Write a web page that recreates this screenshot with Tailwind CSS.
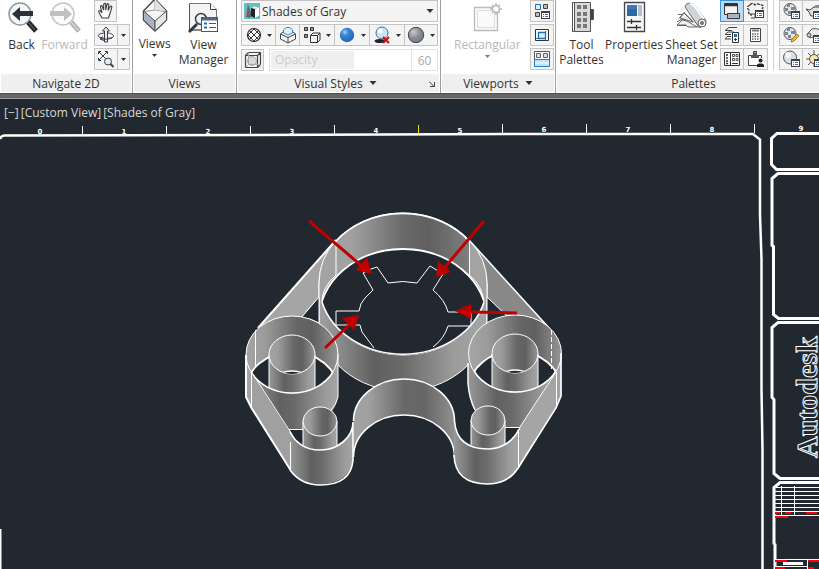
<!DOCTYPE html>
<html lang="en">
<head>
<meta charset="utf-8">
<meta name="viewport" content="width=device-width, initial-scale=1">
<title>Drawing workspace</title>
<script src="https://cdn.jsdelivr.net/npm/@tailwindcss/browser@4"></script>
</head>
<body class="h-screen flex flex-col overflow-hidden bg-[#212830] font-['Open_Sans','Noto_Sans',sans-serif] text-[12px] leading-[15px] text-[#333]">

<!-- Shared symbols -->
<svg class="hidden" aria-hidden="true">
  <symbol id="caret" viewBox="0 0 7 4"><path d="M0 0h7L3.500 4z" fill="currentColor"/></symbol>
  <symbol id="list" viewBox="0 0 9 8"><rect x=".5" y=".5" width="8" height="7" fill="#fff" stroke="#3c4048"/><path d="M1 1.500h7" stroke="#3c4048"/><path d="M2 3.500h1M4 3.500h3M2 5.500h1M4 5.500h3" stroke="#4a6fa5"/></symbol>
</svg>

<header class="flex h-[93px] shrink-0 overflow-hidden bg-white">

  <section class="flex w-[133px] shrink-0 flex-col border-r border-[#a0a0a0]">
    <div class="flex flex-1 px-px">
      <button class="flex w-[41px] flex-col items-center">
        <svg class="h-[37px] w-[32px]" viewBox="0 0 32 37" fill="none"><path d="M22 22l8 9" stroke="#22262b" stroke-width="5"/><path d="M23 23l6 7" stroke="#777" stroke-width="1"/><circle cx="14" cy="14" r="11" fill="#f3f8fb" stroke="#8c979e" stroke-width="1.500"/><path d="M6 14l8-7v4h13v5H14v5z" fill="#2c3138"/></svg>
        <span>Back</span>
      </button>
      <button class="flex w-[45px] flex-col items-center text-[#b8b8b8]" disabled>
        <svg class="h-[37px] w-[34px]" viewBox="0 0 34 37" fill="none"><path d="M23 22l8 9" stroke="#b5b5b5" stroke-width="5"/><path d="M23 22l7 8" stroke="#eee" stroke-width="1"/><circle cx="15" cy="14" r="11" fill="#fbfbfb" stroke="#c4c4c4" stroke-width="1.500"/><path d="M24 14l-8-7v4H2v5h14v5z" fill="#c0c0c0"/></svg>
        <span>Forward</span>
      </button>
      <div class="ml-[7px] flex flex-col items-start gap-[2px]">
        <button aria-label="Pan" class="flex h-[22px] w-[23px] items-center justify-center border border-[#c4c4c4] bg-[#f4f4f4]">
          <svg class="h-[18px] w-[18px]" viewBox="0 0 18 18"><path d="M5 16L2 10.500c-1-1.800.5-2.600 1.500-1.300L5 11 3.500 5c-.3-1.600 1.400-1.900 1.800-.5L6.700 8V2.500c0-1.500 1.900-1.500 2 0V8l1.300-5.500c.4-1.400 2-1 1.800.5L11 8.500l2-3.700c.8-1.200 2.200-.5 1.700.8L13 11.500 11.500 16z" fill="#fff" stroke="#3a3d42" stroke-width="1.100"/></svg>
        </button>
        <div class="flex h-[22px] w-[36px] border border-[#c4c4c4] bg-[#f4f4f4]">
          <button aria-label="Orbit" class="flex w-[23px] items-center justify-center border-r border-[#c4c4c4]"><svg class="h-[18px] w-[18px]" viewBox="0 0 18 18" fill="none" stroke="#3a3d42"><path d="M7 7C2 7.500 0 9.500 2 11s12 2 14 0c1.500-2-1-3.500-5-4M6 10.500l-3 2.500 4 1.500"/><path d="M7.500 16V5H5.500L9 1l3.500 4h-2v11z" fill="#e4edf4"/><path d="M3 12.500c4 1 8 1 12-.5"/></svg></button>
          <button aria-label="Orbit options" class="flex flex-1 items-center justify-center"><svg class="h-[3px] w-[5px]"><use href="#caret"/></svg></button>
        </div>
        <div class="flex h-[22px] w-[36px] border border-[#c4c4c4] bg-[#f4f4f4]">
          <button aria-label="Zoom extents" class="flex w-[23px] items-center justify-center border-r border-[#c4c4c4]"><svg class="h-[18px] w-[18px]" viewBox="0 0 18 18" fill="none" stroke="#3a3d42"><path d="M2 2l8 8M10 2l-8 8M1.500 4V1.500H4M8 1.500h2.500V4M1.500 8v2.500H4"/><circle cx="11" cy="11.500" r="3.500" fill="#dcebf5"/><path d="M13.500 14l3 3" stroke-width="2"/></svg></button>
          <button aria-label="Zoom options" class="flex flex-1 items-center justify-center"><svg class="h-[3px] w-[5px]"><use href="#caret"/></svg></button>
        </div>
      </div>
    </div>
    <h2 class="mx-px mb-px flex h-[18px] items-center justify-center bg-[#efefef]">Navigate 2D</h2>
  </section>

  <section class="flex w-[104px] shrink-0 flex-col border-r border-[#a0a0a0]">
    <div class="flex flex-1 justify-center gap-[8px] pr-[2px]">
      <button class="flex flex-col items-center">
        <svg class="h-[36px] w-[26px]" viewBox="0 0 26 36" stroke="#4a4d52" stroke-linejoin="round"><path d="M13-1L1.500 11v9L13 31l11.500-11v-9z" fill="#f5f5f5" stroke-width="1.500"/><path d="M1.500 11L13 21v10L1.500 20z" fill="#a9b4c0"/><path d="M24.500 11L13 21v10l11.500-11z" fill="#e6e6e6"/><path d="M13-1v11L3 11.500M13 10l10 1.500" fill="none" stroke="#999"/><path d="M13-1v11l11 1z" fill="#e2e2e2" stroke="none"/></svg>
        <span>Views</span>
        <svg class="mt-[3px] h-[3px] w-[5px]"><use href="#caret"/></svg>
      </button>
      <button class="flex flex-col items-center">
        <svg class="h-[37px] w-[32px]" viewBox="0 0 32 37" fill="none"><path d="M2.500 3.500h21l6 6V30h-27z" fill="#f4f4f4" stroke="#777"/><path d="M23.500 3.500v6h6" fill="#fff" stroke="#3c4048"/><path d="M2 30h13M2.500 4v26" stroke="#555"/><circle cx="14" cy="19" r="5.500" fill="#e8f2f9" stroke="#3c4048" stroke-width="1.500"/><path d="M10 24l-8 8" stroke="#33373c" stroke-width="3"/><rect x="14.500" y="17.500" width="16" height="14" fill="#fff" stroke="#4a5568"/><path d="M15 19h15" stroke="#58667c" stroke-width="3"/><path d="M17 23.500h3M17 27.500h3" stroke="#2d6cb5" stroke-width="2"/><path d="M22 23.500h7M22 27.500h7" stroke="#555"/></svg>
        <span>View<br>Manager</span>
      </button>
    </div>
    <h2 class="mx-px mb-px flex h-[18px] items-center justify-center bg-[#efefef]">Views</h2>
  </section>

  <section class="flex w-[204px] shrink-0 flex-col border-r border-[#a0a0a0]">
    <div class="flex flex-1 flex-col gap-[2px] pr-[2px] pl-[4px]">
      <div class="relative flex h-[22px] border border-[#c4c4c4] bg-[#f4f4f4]">
        <svg class="absolute top-[2px] left-[2px] h-[16px] w-[16px]" viewBox="0 0 16 16"><path d="M0 0h16v16H0z" fill="#5cc4c6"/><path d="M4 1l4 12-3 2-5-2z" fill="#666"/><path d="M4 1L2 14l-2-1z" fill="#aaa"/><path d="M7 5l3-2 5 1v9l-4 2-4-2z" fill="#222"/><path d="M7 5l3-2 5 1-4 2z" fill="#eee"/><path d="M11 6l4-2v9l-4 2z" fill="#fff"/></svg>
        <select aria-label="Visual style" class="flex-1 appearance-none pl-[20px] outline-none"><option>Shades of Gray</option></select>
        <svg class="pointer-events-none absolute top-[8px] right-[3px] h-[4px] w-[8px]"><use href="#caret"/></svg>
      </div>
      <div class="flex h-[22px] divide-x divide-[#c4c4c4] border border-[#c4c4c4] bg-[#f4f4f4]">
        <button aria-label="X-ray" class="flex w-[34px] items-center justify-center gap-[5px]"><svg class="h-[16px] w-[16px]" viewBox="0 0 16 16" fill="none" stroke="#222"><circle cx="8" cy="8" r="6.500" fill="#fff" stroke-width="1.200"/><path d="M4 4l8 8M8 2l6 6M2 8l6 6M12 4l-8 8M8 2L2 8M14 8l-6 6" stroke-width=".9"/></svg><svg class="h-[3px] w-[5px]"><use href="#caret"/></svg></button>
        <button aria-label="Isolines" class="flex w-[24px] items-center justify-center"><svg class="h-[18px] w-[18px]" viewBox="0 0 18 18" stroke="#444" stroke-linejoin="round"><path d="M1.500 8L5 5h8l3.500 3v5L9 17l-7.500-4z" fill="#f5f5f5"/><path d="M1.500 8L9 11.500 16.500 8M9 11.500V17" fill="none"/><path d="M4.500 7V4L7 1.500h4L13.500 4v3L9 9z" fill="#dff0fb" stroke="#3b8cc9"/></svg></button>
        <button aria-label="Edge faces" class="flex w-[35px] items-center justify-center gap-[5px]"><svg class="h-[18px] w-[18px]" viewBox="0 0 18 18" fill="none" stroke="#333"><path d="M1.500 1.500h3v3h-3zM7.500 1.500h3v3h-3zM1.500 8.500h3v3h-3z" fill="#999"/><path d="M7.500 9.500L10 7h7v7l-2.500 2.500h-7zM7.500 9.500h7v7M14.500 9.500L17 7" fill="#f8f8f8" stroke-linejoin="round"/></svg><svg class="h-[3px] w-[5px]"><use href="#caret"/></svg></button>
        <button aria-label="Lighting quality" class="flex w-[35px] items-center justify-center gap-[6px]"><svg class="h-[16px] w-[16px]" viewBox="0 0 16 16"><defs><radialGradient id="blue" cx=".35" cy=".3" r=".7"><stop stop-color="#a4d0f5"/><stop offset=".35" stop-color="#3a86d4"/><stop offset="1" stop-color="#1e67bc"/></radialGradient></defs><circle cx="8" cy="8" r="7.200" fill="url(#blue)"/></svg><svg class="h-[3px] w-[5px]"><use href="#caret"/></svg></button>
        <button aria-label="Shadows" class="flex w-[35px] items-center justify-center gap-[5px]"><svg class="h-[18px] w-[17px]" viewBox="0 0 17 18"><ellipse cx="6" cy="15" rx="5.500" ry="2" fill="#222"/><circle cx="8" cy="7" r="6" fill="#cde6f7" stroke="#3f6e96"/><circle cx="6" cy="5" r="2.500" fill="#fff"/><path d="M9 11l6 6M15 11l-6 6" stroke="#cf1111" stroke-width="2.200"/></svg><svg class="h-[3px] w-[5px]"><use href="#caret"/></svg></button>
        <button aria-label="Materials" class="flex flex-1 items-center justify-center gap-[5px]"><svg class="h-[18px] w-[18px]" viewBox="0 0 18 18"><defs><radialGradient id="gray" cx=".35" cy=".3" r=".75"><stop stop-color="#c8ccd2"/><stop offset=".5" stop-color="#8b9098"/><stop offset="1" stop-color="#767a80"/></radialGradient></defs><circle cx="9" cy="9" r="7.700" fill="url(#gray)" stroke="#43474d"/></svg><svg class="h-[3px] w-[5px]"><use href="#caret"/></svg></button>
      </div>
      <div class="mt-px flex h-[22px] gap-[5px]">
        <button aria-label="X-ray effect" class="flex w-[23px] items-center justify-center border border-[#c4c4c4] bg-[#f4f4f4]"><svg class="h-[18px] w-[18px]" viewBox="0 0 18 18" fill="none" stroke="#444"><path d="M1.500 4.500L4.500 1.500h12v12l-3 3h-12zM1.500 4.500h12v12M13.500 4.500l3-3" stroke-width="1.200" stroke-linejoin="round"/><circle cx="8" cy="10" r="4.500" fill="#d8d8d8" stroke="#aaa"/><path d="M4.500 1.500v12h12M4.500 13.500l-3 3" stroke="#aaa"/></svg></button>
        <div class="relative flex flex-1 border border-[#e2e2e2]">
          <input id="opacity" type="range" value="60" disabled class="m-px min-w-0 flex-1 appearance-none bg-linear-to-r from-[#efefef] from-60% to-white to-60% [&::-webkit-slider-thumb]:opacity-0">
          <label for="opacity" class="pointer-events-none absolute top-[2px] left-[5px] text-[#cccccc]">Opacity</label>
          <input aria-label="Opacity value" value="60" disabled class="w-[26px] border-l border-[#e2e2e2] text-center text-[#aaa]">
        </div>
      </div>
    </div>
    <h2 class="relative mx-px mb-px flex h-[18px] items-center justify-center gap-[6px] bg-[#efefef] pr-[6px]">Visual Styles <svg class="h-[4px] w-[8px]"><use href="#caret"/></svg>
      <svg class="absolute right-[4px] bottom-[5px] h-[6px] w-[6px]" viewBox="0 0 6 6" stroke="#444" fill="none"><path d="M0 .5l5 5M5.500 1v4.500H1"/></svg></h2>
  </section>

  <section class="flex w-[115px] shrink-0 flex-col border-r border-[#a0a0a0]">
    <div class="flex flex-1 justify-between pr-px pl-[13px]">
      <button class="flex flex-col items-center text-[#b8b8b8]" disabled>
        <svg class="h-[37px] w-[32px]" viewBox="0 0 32 37" fill="none" stroke="#bbb"><path d="M3.500 7.500h23v23h-23z" fill="#fafafa" stroke-width="1.300"/><path d="M6.500 10.500h17v17h-17z" stroke="#ddd"/><circle cx="25" cy="9" r="3.500" fill="#fff" stroke-width="1.500"/><path d="M25 3v3M25 12v3M19 9h3M28 9h3M21 5l2 2M27 11l2 2M29 5l-2 2M23 11l-2 2" stroke-width="1.500"/></svg>
        <span>Rectangular</span>
        <svg class="mt-[3px] h-[3px] w-[5px] text-[#777]"><use href="#caret"/></svg>
      </button>
      <div class="flex flex-col gap-[2px]">
        <button aria-label="Named viewports" class="flex h-[22px] w-[24px] items-center justify-center border border-[#c4c4c4] bg-[#f4f4f4]"><svg class="h-[18px] w-[18px]" viewBox="0 0 18 18" fill="none"><path d="M2.500 2.500h5v5h-5z" fill="#dff0fb" stroke="#1c72b8"/><path d="M10.500 2.500h4v4h-4zM2.500 10.500h4v4h-4z" fill="#bbb" stroke="#444"/><use href="#list" x="8" y="9" width="9" height="8"/></svg></button>
        <button aria-label="Clip viewport" class="flex h-[22px] w-[24px] items-center justify-center border border-[#c4c4c4] bg-[#f4f4f4]"><svg class="h-[18px] w-[18px]" viewBox="0 0 18 18" fill="none"><path d="M2.500 3.500h13v11h-13z" fill="#fff" stroke="#333"/><path d="M5.500 6.500h7v6h-7z" fill="#dff0fb" stroke="#1c72b8" stroke-width="1.300"/><path d="M3 12.500h10M12.500 5v9" stroke="#1c72b8"/></svg></button>
        <button aria-label="Join viewports" class="flex h-[22px] w-[24px] items-center justify-center border border-[#c4c4c4] bg-[#f4f4f4]"><svg class="h-[18px] w-[18px]" viewBox="0 0 18 18" fill="none"><path d="M1.500 1.500h15v15h-15z" fill="#fff" stroke="#555"/><path d="M3.500 3.500h4v4h-4zM10.500 3.500h4v4h-4z" fill="#ddd" stroke="#666"/><path d="M1.500 9.500h15v7h-15z" fill="#bfe3fa" stroke="#1c85cc"/><path d="M2 13h14" stroke="#fff"/></svg></button>
      </div>
    </div>
    <h2 class="mx-px mb-px flex h-[18px] items-center justify-center gap-[6px] bg-[#efefef]">Viewports <svg class="h-[4px] w-[8px]"><use href="#caret"/></svg></h2>
  </section>

  <section class="flex w-[276px] shrink-0 flex-col border-r border-[#a0a0a0]">
    <div class="flex flex-1 pl-[3px]">
      <button class="flex w-[45px] flex-col items-center">
        <svg class="h-[37px] w-[26px]" viewBox="0 0 26 37"><path d="M3.500 2.500h18v7h3v10h-3v12h-18z" fill="#dadada" stroke="#555"/><path d="M3.500 2.500h2v29h-2z" fill="#fff" stroke="#555"/><path d="M21 9h3v11h-3z" fill="#444"/><path d="M8 5h4v4H8zM14 5h4v4h-4zM8 12h4v4H8zM14 12h4v4h-4zM8 18h4v4H8zM14 18h4v4h-4zM8 24h4v4H8zM14 24h4v4h-4z" fill="#777"/></svg>
        <span>Tool<br>Palettes</span>
      </button>
      <button class="flex w-[60px] flex-col items-center">
        <svg class="h-[37px] w-[24px]" viewBox="0 0 24 37"><path d="M2.500 2.500h20v29h-20z" fill="#f7f7f7" stroke="#43474d" stroke-width="1.300"/><path d="M5 5h10v11H5z" fill="#2e66a3"/><path d="M5 5h10v4H5z" fill="#3e78b5"/><path d="M16 5h4v11h-4z" fill="#b8bec6"/><path d="M5 21.500h14M9.500 19v5M5 27.500h14M14.500 25v5" stroke="#333" stroke-width="1.300"/></svg>
        <span>Properties</span>
      </button>
      <button class="flex w-[55px] flex-col items-center">
        <svg class="h-[37px] w-[32px]" viewBox="0 0 32 37" stroke="#666" stroke-linejoin="round"><path d="M1 25.500h14l10 2M1 22l5-3 10 5M3 18.500l5-6 10 10M2 14.500h8" fill="none"/><path d="M1 25l5-5 5 1 10 6H12l-2-2zM4 18l4-5 9 9z" fill="#efefef"/><path d="M9 7c0-4 6-5 9-2l11 14c3 5-2 9-7 7z" fill="#cfd4d9"/><path d="M14 4c2 0 4 1 5 3l9 12" fill="none" stroke="#fff" stroke-width="2"/><circle cx="26" cy="23" r="4" fill="#efefef"/><circle cx="26" cy="23" r="1.500" fill="#888"/></svg>
        <span class="whitespace-nowrap">Sheet Set<br>Manager</span>
      </button>
      <div class="ml-px grid auto-rows-[22px] grid-cols-[24px_24px] gap-y-[2px]">
        <button aria-label="Command line" class="flex items-center justify-center border border-[#3f93dc] bg-[#bcd9f5]"><svg class="h-[18px] w-[20px]" viewBox="0 0 20 18"><path d="M2.500 1.500h13v11h-13z" fill="#f4f4f4" stroke="#333"/><path d="M3 3h12" stroke="#333" stroke-width="2.500"/><path d="M5.500 11.500h12v5h-12z" fill="#b8bcc2" stroke="#333"/><path d="M7 14h9" stroke="#888" stroke-dasharray="1 1"/></svg></button>
        <button aria-label="Markup set manager" class="flex items-center justify-center border border-l-0 border-[#c4c4c4] bg-[#f4f4f4]"><svg class="h-[18px] w-[18px]" viewBox="0 0 18 18" fill="none"><path d="M3 3c1-2 4-2 5 0 2-2 4-1 5 0 3-1 4 2 2 4M3 3C0 4 0 7 2 8c-1 3 0 5 3 5" stroke="#333" stroke-width="1.300" stroke-dasharray="3 1"/><path d="M3 12h5v4H4" stroke="#444"/><use href="#list" x="8" y="8" width="9" height="8"/></svg></button>
        <button aria-label="Layer properties" class="flex items-center justify-center border border-[#c4c4c4] bg-[#f4f4f4]"><svg class="h-[18px] w-[18px]" viewBox="0 0 18 18" fill="none"><path d="M14 1.500H6L2 4.500h7M11 6H5L2 8.500h6M8 10.500H4L2 13h6" stroke="#444"/><path d="M9.500 6.500h6v10h-6z" fill="#fff" stroke="#333"/><path d="M11 8h3v3h-3z" fill="#2a6db5"/><path d="M11 13.500h3M12.500 12v3" stroke="#333"/></svg></button>
        <button aria-label="Calculator" class="flex items-center justify-center border border-l-0 border-[#c4c4c4] bg-[#f4f4f4]"><svg class="h-[18px] w-[18px]" viewBox="0 0 18 18" fill="none"><path d="M3.500 2.500h10v13h-10z" fill="#fff" stroke="#444"/><path d="M5 4.500h7" stroke="#777" stroke-width="2"/><path d="M5 8h7M5 10.500h7M5 13h7" stroke="#666" stroke-width="1.500" stroke-dasharray="1.500 1"/></svg></button>
        <button aria-label="Design center" class="flex items-center justify-center border border-[#c4c4c4] bg-[#f4f4f4]"><svg class="h-[18px] w-[18px]" viewBox="0 0 18 18" fill="none" stroke="#333"><path d="M1.500 2.500h15v13h-15zM7.500 2v14" fill="#fff"/><path d="M3 5h2M3 8h2M3 11h2M3 13.500h2" stroke-width="1.500"/><path d="M9.500 4.500h2v2h-2zM13 4.500h2v2h-2zM9.500 8.500h2v2h-2zM13 8.500h2v2h-2z" stroke="#555"/><path d="M9 13.500h6"/></svg></button>
        <button aria-label="External references" class="flex items-center justify-center border border-l-0 border-[#c4c4c4] bg-[#f4f4f4]"><svg class="h-[18px] w-[18px]" viewBox="0 0 18 18" fill="none"><path d="M10 15.500H1.500v-10h13V8" stroke="#444" fill="#fff"/><path d="M4 5h8v3H4zM6 1h4v4H6z" fill="#555"/><path d="M7.500 2.500h1" stroke="#fff"/><circle cx="13.500" cy="10.500" r="2" fill="#222"/><path d="M10 17v-2c0-2 7-2 7 0v2z" fill="#222"/></svg></button>
      </div>
      <div class="mx-[5px] h-[70px] border-l border-[#d0d0d0]"></div>
      <div class="grid auto-rows-[22px] grid-cols-[24px_24px] gap-y-[2px]">
        <button aria-label="Materials browser" class="flex items-center justify-center border border-[#c4c4c4] bg-[#f4f4f4]"><svg class="h-[18px] w-[18px]" viewBox="0 0 18 18"><circle cx="8" cy="7.500" r="6" fill="#dfe6ec" stroke="#555"/><path d="M5 2h3v3H5zM9 5h4v3H9zM3 6h3v3H3zM6 9h3v3H6z" fill="#7e8994"/><use href="#list" x="9" y="9" width="9" height="8"/></svg></button>
        <button aria-label="Render" class="flex items-center justify-center border border-l-0 border-[#c4c4c4] bg-[#f4f4f4]"><svg class="h-[18px] w-[20px]" viewBox="0 0 20 18"><path d="M1 7l4 1 4-3h7v9H6L4 10z" fill="#dfe3e6" stroke="#444"/><path d="M8 5l3-2h3l3 2z" fill="#888"/><use href="#list" x="8" y="9" width="9" height="8"/></svg></button>
        <button aria-label="Materials editor" class="flex items-center justify-center border border-[#c4c4c4] bg-[#f4f4f4]"><svg class="h-[18px] w-[18px]" viewBox="0 0 18 18"><circle cx="8" cy="7.500" r="6" fill="#dfe6ec" stroke="#555"/><path d="M5 2h3v3H5zM9 5h4v3H9zM3 6h3v3H3zM6 9h3v3H6z" fill="#7e8994"/><path d="M9 16l1-3 5-5 2 2-5 5z" fill="#f5b32e" stroke="#8d5a10" stroke-width=".7"/></svg></button>
        <button aria-label="Attach material" class="flex items-center justify-center border border-l-0 border-[#c4c4c4] bg-[#f4f4f4]"><svg class="h-[18px] w-[20px]" viewBox="0 0 20 18"><path d="M2 8l5-5c4-1 7 0 9 2v6H8L5 12z" fill="#e8eaec" stroke="#555"/><circle cx="4" cy="9" r="2" fill="#ccc" stroke="#555"/><use href="#list" x="8" y="9" width="9" height="8"/></svg></button>
        <button aria-label="Visual styles manager" class="flex items-center justify-center border border-[#c4c4c4] bg-[#f4f4f4]"><svg class="h-[18px] w-[18px]" viewBox="0 0 18 18"><circle cx="8" cy="7.500" r="6.500" fill="#dadfe2" stroke="#555"/><circle cx="6" cy="5" r="3" fill="#f6f6f6"/><use href="#list" x="9" y="9" width="9" height="8"/></svg></button>
        <button aria-label="Sun properties" class="flex items-center justify-center border border-l-0 border-[#c4c4c4] bg-[#f4f4f4]"><svg class="h-[18px] w-[20px]" viewBox="0 0 20 18"><path d="M9 0v17M1 9h17M3 3l12 12M15 3L3 15" stroke="#555"/><circle cx="9" cy="9" r="4.500" fill="#fbe3ac" stroke="#555"/><use href="#list" x="9" y="9" width="9" height="8"/></svg></button>
      </div>
    </div>
    <h2 class="mx-px mb-px flex h-[18px] items-center justify-center bg-[#efefef]">Palettes</h2>
  </section>
</header>

<div class="h-[6px] shrink-0 border-t border-b border-t-[#505050] border-b-[#999] bg-[#666]"></div>

<main class="flex min-h-0 flex-1 flex-col">
  <nav class="flex h-[24px] shrink-0 items-center gap-[2px] px-[4px] pt-[3px] text-[#d6d8da]">
    <button>[−]</button><button>[Custom View]</button><button>[Shades of Gray]</button>
  </nav>
  <svg class="min-h-0 w-full flex-1" viewBox="0 123 819 446" preserveAspectRatio="xMinYMin meet" fill="none" role="img" aria-label="Shaded bracket model">
    <defs>
      <linearGradient id="ringIn" gradientUnits="userSpaceOnUse" x1="319" x2="487" y1="0" y2="0"><stop stop-color="#a5a5a5"/><stop offset=".2" stop-color="#a0a0a0"/><stop offset=".5" stop-color="#6a6a6a"/><stop offset=".65" stop-color="#606060"/><stop offset=".88" stop-color="#7c7c7c"/><stop offset="1" stop-color="#aaa"/></linearGradient>
      <linearGradient id="ringOut" gradientUnits="userSpaceOnUse" x1="319" x2="487" y1="0" y2="0"><stop stop-color="#a0a0a0"/><stop offset=".12" stop-color="#8c8c8c"/><stop offset=".33" stop-color="#606060"/><stop offset=".5" stop-color="#6a6a6a"/><stop offset=".8" stop-color="#9b9b9b"/><stop offset="1" stop-color="#a5a5a5"/></linearGradient>
      <linearGradient id="inner"><stop stop-color="#a5a5a5"/><stop offset=".2" stop-color="#9c9c9c"/><stop offset=".55" stop-color="#666"/><stop offset=".72" stop-color="#606060"/><stop offset="1" stop-color="#969696"/></linearGradient>
      <linearGradient id="outer"><stop stop-color="#989898"/><stop offset=".2" stop-color="#787878"/><stop offset=".33" stop-color="#606060"/><stop offset=".5" stop-color="#6a6a6a"/><stop offset=".85" stop-color="#9a9a9a"/><stop offset="1" stop-color="#a5a5a5"/></linearGradient>
      <linearGradient id="arch"><stop stop-color="#a2a2a2"/><stop offset=".15" stop-color="#a0a0a0"/><stop offset=".5" stop-color="#686868"/><stop offset=".7" stop-color="#666"/><stop offset="1" stop-color="#909090"/></linearGradient>
      <clipPath id="ringTop"><ellipse cx="403" cy="284" rx="84" ry="71"/></clipPath>
      <clipPath id="bossTop"><ellipse cx="292" cy="354.500" rx="46" ry="38.500"/></clipPath>
      <clipPath id="boreTop"><ellipse cx="292" cy="354.500" rx="23" ry="19.500"/></clipPath>
      <clipPath id="postL"><path d="M246 330h92v24.500a46 38.500 0 0 1-92 0z"/></clipPath>
      <clipPath id="footL"><path d="M287 380h66v42a33 28 0 0 1-66 0z"/></clipPath>
    </defs>

    <!-- Ruler and sheet borders -->
    <g stroke="#fff">
      <path d="M82.500 126v10M166.500 126v10M250.500 126v10M334.500 125v10M502.500 124v10M586.500 124v10M670.500 124v10M754.500 124v9M190 134.500h28"/>
      <path d="M418.500 125v9" stroke="#e6e600"/>
      <path d="M0 139q1-3 4-3.500l250-.5 280-1h219l7 5.500v75l1.500 45v130l1 60v121" stroke-width="2.500"/>
      <path d="M819 133.500h-42l-5.500 5v26l5 5h42.500M819 173.500h-41l-6 5v67l1.500 1v68l5 4h40.500M819 322.500h-41l-6 5v70l2 2v74l6 5h39M819 482.500h-39l-6 5v56l1 1v25" stroke-width="3"/>
      <path d="M.5 529v40" stroke-width="2"/>
      <path d="M775 487.500h44M775 491.500h44M775 495.500h44M775 499.500h44M775 503.500h44M775 507.500h44M775 511.500h44M775 515.500h44M781.500 486v30M794.500 486v30M775 559.500h44M807.500 559v10M775 566.500h32"/>
      <path d="M783 563.500h20" stroke-width="3"/>
      <path d="M775 513h5M785 513h6M806 513h11M775 517h13M775 561h12M808 561h11M775 568h10M808 568h6" stroke="#f00" stroke-width="2"/>
    </g>
    <g fill="#fff" font-family="'DejaVu Sans',sans-serif" font-size="7" font-weight="bold" text-anchor="middle">
      <text x="40" y="134">0</text><text x="124" y="134">1</text><text x="208" y="134">2</text><text x="292" y="134">3</text><text x="376" y="133">4</text><text x="460" y="133">5</text><text x="544" y="132">6</text><text x="628" y="132">7</text><text x="712" y="132">8</text><text x="801" y="131">9</text>
    </g>
    <text transform="translate(817 458) rotate(-90)" font-family="'Liberation Serif',serif" font-size="30" font-weight="bold" stroke="#fff" stroke-width="1">Autodesk</text>

    <!-- Straight walls behind the ring -->
    <g stroke="#fff">
      <path d="M336 240L258 328l30 2 31-33 30-20z" fill="#a5a5a5" stroke="none"/>
      <path d="M336 240L258 328" stroke-width="2"/>
      <path d="M469 240L550 329l-35 0-28-32-20-20z" fill="#888" stroke="none"/>
      <path d="M469 240L550 329" stroke-width="1.500"/>
      <path d="M319 297l-18 20M487 297l21 22"/>

      <!-- Main ring -->
      <path d="M319 284v36a84 71 0 0 0 168 0v-36z" fill="url(#ringOut)"/>
      <ellipse cx="403" cy="284" rx="84" ry="71" fill="url(#ringIn)"/>
      <path d="M319 320v-36q0-26 17-43v34q-14 12-14 27M487 320v-36q0-26-17.500-43v34q14 12 14 27" fill="#a3a3a3"/>
      <g clip-path="url(#ringTop)"><ellipse cx="403" cy="320" rx="84" ry="71" fill="#212830" stroke-width="1.800"/></g>
      <path d="M322 302a84 71 0 0 0 162 0" stroke-width="1.500"/>
      <path d="M336 241A84 71 0 0 1 469 241" stroke-width="1.800"/>
      <path d="M374 348l-12-16-2-7h-24v-14h23q1-8 6-13l8-8-10-17 8-4 6-2 11 16q15-3 29 0l13-17 13 8-10 16q12 10 15 22h23v14h-23q-4 13-15 21"/>

      <!-- Gaps beside the ring -->
      <path d="M319 297l-18 21q10 0 18 5zM487 297l21 20q-11 1-21 6z" fill="#212830"/>

      <!-- Left boss -->
      <path d="M246 354.500v42l5.500 11 1-36z" fill="#a3a3a3" stroke="none"/>
      <path d="M251 372l38 57.500h22q24-14 27-32.500v-42.500z" fill="url(#outer)" stroke="none"/>
      <ellipse cx="292" cy="354.500" rx="46" ry="38.500" fill="url(#inner)"/>
      <g clip-path="url(#bossTop)"><ellipse cx="292" cy="390.500" rx="46" ry="38.500" fill="#212830" stroke-width="1.800"/></g>
      <g clip-path="url(#postL)"><path d="M269 354.500v50h46v-50" fill="url(#outer)"/></g>
      <ellipse cx="292" cy="354.500" rx="23" ry="19.500" fill="url(#inner)"/>
      <g clip-path="url(#boreTop)"><ellipse cx="292" cy="390.500" rx="23" ry="19.500" fill="#212830" stroke-width="1.500"/></g>
      <path d="M251 372a46 38.500 0 0 0 82 0" stroke-width="1.600"/>
      <path d="M338 354v43q-2 8-7 13M255.500 330v36"/>

      <!-- Right boss -->
      <g transform="translate(223 -1)">
        <path d="M338.500 354.500v42l-5.500 11-1-36z" fill="#a3a3a3" stroke="none"/>
        <path d="M245 354.500v29q1 16 7 28l14 17.500h31l36-57z" fill="url(#outer)" stroke="none"/>
        <ellipse cx="292" cy="354.500" rx="46.500" ry="38.500" fill="url(#inner)"/>
        <g clip-path="url(#bossTop)"><ellipse cx="292" cy="390.500" rx="46" ry="38.500" fill="#212830" stroke-width="1.800"/></g>
        <g clip-path="url(#postL)"><path d="M269 354.500v50h46v-50" fill="url(#outer)"/></g>
        <ellipse cx="292" cy="354.500" rx="23" ry="19.500" fill="url(#inner)"/>
        <g clip-path="url(#boreTop)"><ellipse cx="292" cy="390.500" rx="23" ry="19.500" fill="#212830" stroke-width="1.500"/></g>
        <path d="M251 372a46 38.500 0 0 0 82 0" stroke-width="1.600"/>
        <path d="M245 364v20q1 15 7 27" stroke-width="1.500"/>
        <path d="M328.500 331v39" stroke-dasharray="5 2"/>
      </g>

      <!-- Outer walls down to the feet -->
      <path d="M251 372v36l39 62v-38z" fill="#a0a0a0" stroke="none"/>
      <path d="M246 355v42l5.500 11 39 62" stroke-width="2"/>
      <path d="M251.500 372v36M251.500 372l39 60"/>
      <path d="M556 372l-38 58v40l38-62z" fill="#a5a5a5" stroke="none"/>
      <path d="M561 353v43l-5 12-38 60" stroke-width="1.600"/>
      <path d="M556.500 372v36M556 372l-38 58"/>

      <!-- Foot openings -->
      <path d="M289 429.500h15v17l-9-7zM504 427.500h16l-3 6-13 13z" fill="#212830"/>

      <!-- Centre arch -->
      <path d="M353.500 421a50.500 42 0 0 1 101 0v36a50.500 42 0 0 0-101 0z" fill="url(#arch)" stroke="none"/>
      <path d="M353.500 421a50.500 42 0 0 1 101 0M353.500 457a50.500 42 0 0 1 101 0" stroke-width="1.600"/>

      <!-- Left foot -->
      <path d="M290 432v38q10 15 30 15 33-3 33-28v-35a33 28 0 0 1-63 10z" fill="url(#outer)" stroke="none"/>
      <g clip-path="url(#footL)"><path d="M303 421v40h34v-40" fill="url(#outer)"/></g>
      <ellipse cx="320" cy="421.500" rx="17" ry="14.500" fill="url(#inner)"/>
      <path d="M290 432q9 18 30 18a33 28 0 0 0 33-28v38q-2 25-33 25-19 0-30-15" stroke-width="1.600"/>
      <path d="M290.500 442v28"/>

      <!-- Right foot -->
      <path d="M454 421v37a33 28 0 0 0 34 26q20 0 30-16v-38a33 28 0 0 1-64-9z" fill="url(#outer)" stroke="none"/>
      <g clip-path="url(#footL)" transform="translate(168 -1)"><path d="M303 421v40h34v-40" fill="url(#outer)"/></g>
      <ellipse cx="488" cy="420.500" rx="17" ry="14.500" fill="url(#inner)"/>
      <path d="M454.500 421q2 28 33.500 28 22-1 31-20M454 455q1 29 34 29 20 0 30-16" stroke-width="1.600"/>
      <path d="M518.500 430v38"/>
    </g>

    <!-- Callout arrows -->
    <g stroke="#c00000" stroke-width="3" fill="#c00000">
      <path d="M309 221l54 46M484 221l-39 46M325 348l24-23M517 313l-47-1"/>
      <path stroke="none" d="M372 274l-16.500-4 11.500-12.500zM436 277l2-16 13 11zM359 315l-5 15-12-12zM455 311l16-7v15z"/>
    </g>
  </svg>
</main>
</body>
</html>
